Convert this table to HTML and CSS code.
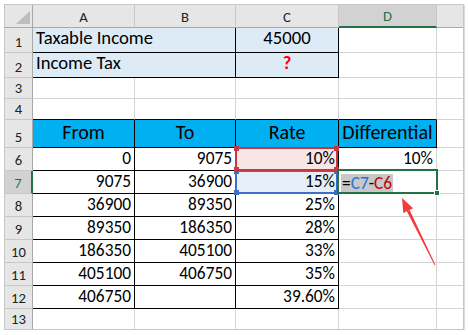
FILE: index.html
```html
<!DOCTYPE html>
<html>
<head>
<meta charset="utf-8">
<link rel="stylesheet" href="styles.css">
</head>
<body>
<div class="sheet">
  <div class="grid">
    <div class="corner"><svg class="tri" width="14" height="13" viewBox="0 0 14 13"><polygon points="0,13 14,13 14,0" fill="#bdbdbd"/></svg></div>
    <div class="ch">A</div>
    <div class="ch">B</div>
    <div class="ch">C</div>
    <div class="ch ch-sel">D</div>
    <div class="ch last"></div>

    <div class="rh">1</div>
    <div class="c fill-blue span2 bk-b bk-r big">Taxable Income</div>
    <div class="c fill-blue center bk-b bk-r big">45000</div>
    <div class="c"></div>
    <div class="c last"></div>

    <div class="rh">2</div>
    <div class="c fill-blue span2 bk-b bk-r big">Income Tax</div>
    <div class="c fill-blue center bk-b bk-r big"><span class="qmark">?</span></div>
    <div class="c"></div>
    <div class="c last"></div>

    <div class="rh">3</div>
    <div class="c"></div>
    <div class="c"></div>
    <div class="c"></div>
    <div class="c"></div>
    <div class="c last"></div>

    <div class="rh">4</div>
    <div class="c bk-b"></div>
    <div class="c bk-b"></div>
    <div class="c bk-b"></div>
    <div class="c bk-b"></div>
    <div class="c last"></div>

    <div class="rh">5</div>
    <div class="c head bk-b bk-r">From</div>
    <div class="c head bk-b bk-r">To</div>
    <div class="c head bk-b bk-r">Rate</div>
    <div class="c head bk-b bk-r">Differential</div>
    <div class="c last"></div>

    <div class="rh">6</div>
    <div class="c num bk-b bk-r">0</div>
    <div class="c num bk-b bk-r">9075</div>
    <div class="c num bk-b bk-r fill-pink">10%<span class="ref ref-red"><i class="h tl"></i><i class="h tr"></i><i class="h bl"></i><i class="h br"></i></span></div>
    <div class="c num">10%</div>
    <div class="c last"></div>

    <div class="rh rh-sel">7</div>
    <div class="c num bk-b bk-r">9075</div>
    <div class="c num bk-b bk-r">36900</div>
    <div class="c num bk-b bk-r fill-lblue">15%<span class="ref ref-blue"><i class="h tl"></i><i class="h tr"></i><i class="h bl"></i><i class="h br"></i></span></div>
    <div class="c edit"><span class="formula">=<span class="f-blue">C7</span>-<span class="f-red">C6</span></span><span class="active"><i class="fillh"></i></span></div>
    <div class="c last"></div>

    <div class="rh">8</div>
    <div class="c num bk-b bk-r">36900</div>
    <div class="c num bk-b bk-r">89350</div>
    <div class="c num bk-b bk-r">25%</div>
    <div class="c"></div>
    <div class="c last"></div>

    <div class="rh">9</div>
    <div class="c num bk-b bk-r">89350</div>
    <div class="c num bk-b bk-r">186350</div>
    <div class="c num bk-b bk-r">28%</div>
    <div class="c"></div>
    <div class="c last"></div>

    <div class="rh">10</div>
    <div class="c num bk-b bk-r">186350</div>
    <div class="c num bk-b bk-r">405100</div>
    <div class="c num bk-b bk-r">33%</div>
    <div class="c"></div>
    <div class="c last"></div>

    <div class="rh">11</div>
    <div class="c num bk-b bk-r">405100</div>
    <div class="c num bk-b bk-r">406750</div>
    <div class="c num bk-b bk-r">35%</div>
    <div class="c"></div>
    <div class="c last"></div>

    <div class="rh">12</div>
    <div class="c num bk-b bk-r">406750</div>
    <div class="c num bk-b bk-r"></div>
    <div class="c num bk-b bk-r">39.60%</div>
    <div class="c"></div>
    <div class="c last"></div>

    <div class="rh bottom">13</div>
    <div class="c bottom"></div>
    <div class="c bottom"></div>
    <div class="c bottom"></div>
    <div class="c bottom"></div>
    <div class="c last bottom"></div>
  </div>
</div>
<svg class="arrow" width="468" height="335" viewBox="0 0 468 335">
  <polygon points="402,198 413.1,208.2 403.3,213 " fill="#f23c3c"/>
  <polygon points="409.6,209.9 406.8,211.3 434.6,265.2 435.4,264.8" fill="#f23c3c"/>
</svg>
</body>
</html>
```

FILE: styles.css
```css
* { box-sizing: border-box; }

body {
  margin: 0;
  background: #ffffff;
  font-family: Carlito, Lato, "Liberation Sans", sans-serif;
  color: #000;
}

.sheet {
  margin: 4px 0 0 4px;
  width: 460px;
  border: 1px solid #c6c6c6;
  box-shadow: 1px 1px 1px #dedede;
}

.grid {
  display: grid;
  grid-template-columns: 28px 102px 101px 103px 98px 26px;
  grid-template-rows: 23px 25px 25px 21px 21px 28px repeat(7, 23px) 20px;
}

.corner {
  background: #e6e6e6;
  border-right: 1px solid #a8a8a8;
  border-bottom: 1px solid #a8a8a8;
  display: flex;
  align-items: flex-end;
  justify-content: flex-end;
  padding: 0 2px 3px 0;
}
.tri { display: block; }

.ch {
  background: #e6e6e6;
  border-right: 1px solid #c8c8c8;
  border-bottom: 1px solid #a8a8a8;
  display: flex;
  align-items: center;
  justify-content: center;
  font-size: 14.67px;
  color: #222;
  padding-top: 1px;
}
.ch.last { border-right: none; }
.ch-sel {
  background: #d2d2d2;
  color: #217346;
  border-bottom: 2px solid #217346;
}

.rh {
  background: #e6e6e6;
  border-right: 1px solid #a8a8a8;
  border-bottom: 1px solid #c8c8c8;
  display: flex;
  align-items: flex-end;
  justify-content: center;
  font-size: 14.67px;
  line-height: 1;
  padding-bottom: 2px;
  color: #222;
}
.rh-sel {
  background: #d2d2d2;
  color: #217346;
  border-right: 2px solid #217346;
}

.c {
  position: relative;
  border-right: 1px solid #d4d4d4;
  border-bottom: 1px solid #d4d4d4;
  display: flex;
  align-items: flex-end;
  font-size: 17.33px;
  line-height: 1;
  padding: 0 3px 3px 3px;
  white-space: nowrap;
}
.c.last { border-right: none; }
.c.bottom, .rh.bottom { border-bottom: none; }

.span2 { grid-column: span 2; }
.bk-b { border-bottom-color: #000; }
.bk-r { border-right-color: #000; }

.big { font-size: 18.67px; padding-bottom: 4px; }
.center { justify-content: center; }
.num { justify-content: flex-end; }

.fill-blue { background: #ddebf7; }
.fill-pink { background: #f8e6e6; }
.fill-lblue { background: #e6eef8; }

.qmark { color: #ff0000; font-weight: bold; }

.head {
  background: #00b0f0;
  justify-content: center;
  font-size: 20px;
  padding-bottom: 5px;
}

.ref {
  position: absolute;
  left: -1px;
  top: -1px;
  right: 0;
  bottom: -1px;
  border: 2px solid;
}
.ref-red { border-color: #c8363e; z-index: 3; }
.ref-blue { border-color: #3a70c8; z-index: 2; }
.ref-red .h { background: #c8363e; }
.ref-blue .h { background: #3a70c8; }
.h {
  position: absolute;
  width: 5px;
  height: 5px;
}
.h.tl { left: -3px; top: -3px; }
.h.tr { right: -3px; top: -3px; }
.h.bl { left: -3px; bottom: -3px; }
.h.br { right: -3px; bottom: -3px; }

.edit { padding: 0 0 1px 2px; }
.formula {
  background: #c8c8c8;
  line-height: 18px;
  padding: 0 1px;
}
.f-blue { color: #2a6fd8; }
.f-red { color: #c00000; }

.active {
  position: absolute;
  left: -2px;
  top: -2px;
  right: -2px;
  bottom: -1px;
  border: 2px solid #217346;
  z-index: 4;
}
.fillh {
  position: absolute;
  right: -4px;
  bottom: -4px;
  width: 6px;
  height: 6px;
  background: #217346;
  border: 1px solid #fff;
}

.arrow {
  position: absolute;
  left: 0;
  top: 0;
  pointer-events: none;
}
```
